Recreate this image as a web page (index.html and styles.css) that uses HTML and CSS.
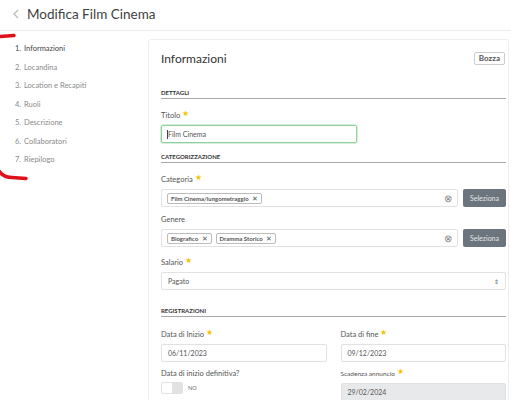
FILE: index.html
```html
<!DOCTYPE html>
<html lang="it">
<head>
    <meta charset="UTF-8">
    <meta name="viewport" content="width=device-width, initial-scale=1.0">
    <title>Modifica Film Cinema</title>
    <link rel="stylesheet" href="styles.css">
</head>
<body>
    <div class="page-header">
        <svg class="back" width="6" height="10" viewBox="0 0 6 10">
            <path d="M5 1 L1 5 L5 9" stroke="#b8b8b8" stroke-width="1.2" fill="none"/>
        </svg>
        <h1>Modifica Film Cinema</h1>
    </div>

    <div class="layout">
        <ol class="steps">
            <li class="active">Informazioni</li>
            <li>Locandina</li>
            <li>Location e Recapiti</li>
            <li>Ruoli</li>
            <li>Descrizione</li>
            <li>Collaboratori</li>
            <li>Riepilogo</li>
        </ol>

        <div class="card">
            <div class="card-head">
                <h2>Informazioni</h2>
                <span class="badge">Bozza</span>
            </div>

            <div class="section-title first">Dettagli</div>
            <div class="field">
                <label>Titolo <span class="star">&#9733;</span></label>
                <div class="input focus"><span class="caret"></span>Film Cinema</div>
            </div>

            <div class="section-title">Categorizzazione</div>
            <div class="field">
                <label>Categoria <span class="star">&#9733;</span></label>
                <div class="picker">
                    <div class="input tags">
                        <span class="tag">Film Cinema/lungometraggio <b>&#10005;</b></span>
                        <span class="clear">&#8855;</span>
                    </div>
                    <button class="btn">Seleziona</button>
                </div>
            </div>
            <div class="field near">
                <label>Genere</label>
                <div class="picker">
                    <div class="input tags">
                        <span class="tag">Biografico <b>&#10005;</b></span>
                        <span class="tag">Dramma Storico <b>&#10005;</b></span>
                        <span class="clear">&#8855;</span>
                    </div>
                    <button class="btn">Seleziona</button>
                </div>
            </div>
            <div class="field mid">
                <label>Salario <span class="star">&#9733;</span></label>
                <div class="input select">Pagato <span class="arrows">&#8661;</span></div>
            </div>

            <div class="section-title reg">Registrazioni</div>
            <div class="row">
                <div class="field dates">
                    <label>Data di Inizio <span class="star">&#9733;</span></label>
                    <div class="input">06/11/2023</div>
                </div>
                <div class="field dates">
                    <label>Data di fine <span class="star">&#9733;</span></label>
                    <div class="input">09/12/2023</div>
                </div>
            </div>
            <div class="row">
                <div class="field tight">
                    <label>Data di inizio definitiva?</label>
                    <div class="switch"><span class="knob"></span><span class="switch-text">NO</span></div>
                </div>
                <div class="field tight">
                    <label class="small">Scadenza annuncio <span class="star">&#9733;</span></label>
                    <div class="input disabled">29/02/2024</div>
                </div>
            </div>
        </div>
    </div>

    <svg class="scribble" width="40" height="200" viewBox="0 0 40 200">
        <path d="M0 36.5 L14 35.5" stroke="#e0101a" stroke-width="3.5" fill="none" stroke-linecap="round"/>
        <path d="M-1 171 Q3 177.5 12 177.5 L26 178.5" stroke="#e0101a" stroke-width="3.5" fill="none" stroke-linecap="round"/>
    </svg>
</body>
</html>
```

FILE: styles.css
```css
body {
    margin: 0;
    font-family: Lato, "Open Sans", sans-serif;
    color: #555;
    background-color: #fff;
    overflow: hidden;
    height: 400px;
}

.page-header {
    display: flex;
    align-items: center;
    height: 31px;
    padding-left: 13px;
    border-bottom: 1px solid #ececec;
    box-sizing: border-box;
}

.back {
    margin-right: 8px;
    margin-top: -2px;
}

.page-header h1 {
    margin: 0 0 2px 0;
    font-size: 13.5px;
    font-weight: normal;
    color: #3f3f3f;
}

.layout {
    display: flex;
    padding-left: 15px;
}

.steps {
    width: 133px;
    margin: 0;
    padding: 13px 0 0 0;
    list-style: none;
    counter-reset: step;
    flex-shrink: 0;
}

.steps li {
    counter-increment: step;
    font-size: 7.5px;
    line-height: 10px;
    height: 18.5px;
    color: #8a8a8a;
}

.steps li::before {
    content: counter(step) ".";
    display: inline-block;
    width: 9px;
}

.steps li.active {
    color: #444;
}

.card {
    flex: 1;
    margin: 8px 2px 0 0;
    padding: 10px 2px 0 12px;
    border: 1px solid #eee;
    border-radius: 3px;
    height: 400px;
}

.card-head {
    display: flex;
    justify-content: space-between;
    align-items: center;
    height: 16px;
}

.card-head h2 {
    margin: 0;
    font-size: 12px;
    font-weight: normal;
    color: #333;
}

.badge {
    font-size: 8px;
    line-height: 11px;
    font-weight: bold;
    color: #555;
    border: 1px solid #ccc;
    border-radius: 2px;
    padding: 0 4px;
    margin-right: 1px;
}

.section-title {
    margin-top: 10px;
    font-size: 6px;
    font-weight: bold;
    text-transform: uppercase;
    color: #333;
    height: 8px;
    line-height: 8px;
    padding-bottom: 1px;
    border-bottom: 1px solid #a8a8a8;
}

.section-title.first {
    margin-top: 23px;
}

.section-title.reg {
    margin-top: 17px;
}

.field {
    margin-top: 12px;
}

.field.near {
    margin-top: 8px;
}

.field.mid {
    margin-top: 11px;
}

.field.dates {
    margin-top: 13px;
}

.field.tight {
    margin-top: 7px;
}

.field label {
    display: block;
    font-size: 7.5px;
    height: 10px;
    line-height: 10px;
    margin-bottom: 4px;
    color: #555;
}

.field label.small {
    font-size: 6.5px;
}

.star {
    color: #f5c400;
    font-size: 8px;
    line-height: 0;
    position: relative;
    top: -2px;
}

.input {
    display: flex;
    align-items: center;
    height: 18px;
    box-sizing: border-box;
    padding: 0 6px;
    border: 1px solid #e2e2e2;
    border-radius: 2px;
    font-size: 7px;
    color: #555;
}

.input.focus {
    width: 196px;
    border-color: #8fd19e;
    box-shadow: 0 0 0 1px #d6efdb;
    padding-left: 5px;
}

.caret {
    width: 1px;
    height: 9px;
    background-color: #444;
}

.input.disabled {
    background-color: #e8e9ea;
    border-color: #e2e2e2;
    margin-top: 2px;
}

.picker {
    display: flex;
    gap: 5px;
}

.picker .input {
    flex: 1;
    padding: 0 5px;
    gap: 4px;
}

.tag {
    font-size: 6px;
    font-weight: bold;
    color: #555;
    border: 1px solid #bbb;
    border-radius: 2px;
    padding: 1px 3px;
    line-height: 7px;
}

.tag b {
    font-size: 6.5px;
    font-weight: normal;
    margin-left: 2px;
}

.clear {
    margin-left: auto;
    margin-right: 0;
    font-size: 10px;
    color: #888;
}

.btn {
    width: 43px;
    height: 18px;
    border: none;
    border-radius: 2px;
    background-color: #6c757d;
    color: #e6e6e6;
    font-family: inherit;
    font-size: 7px;
    padding: 0;
}

.select {
    justify-content: space-between;
}

.arrows {
    font-size: 6px;
    color: #666;
}

.row {
    display: grid;
    grid-template-columns: 1fr 1fr;
    column-gap: 14px;
}

.switch {
    display: flex;
    align-items: center;
    margin-top: -1px;
}

.knob {
    width: 22px;
    height: 12px;
    box-sizing: border-box;
    border-radius: 2px;
    background: linear-gradient(to right, #fff 50%, #e2e2e2 50%);
    border: 1px solid #e2e2e2;
}

.switch-text {
    font-size: 5.5px;
    margin-left: 5px;
    color: #666;
}

.scribble {
    position: absolute;
    left: 0;
    top: 0;
}
```
